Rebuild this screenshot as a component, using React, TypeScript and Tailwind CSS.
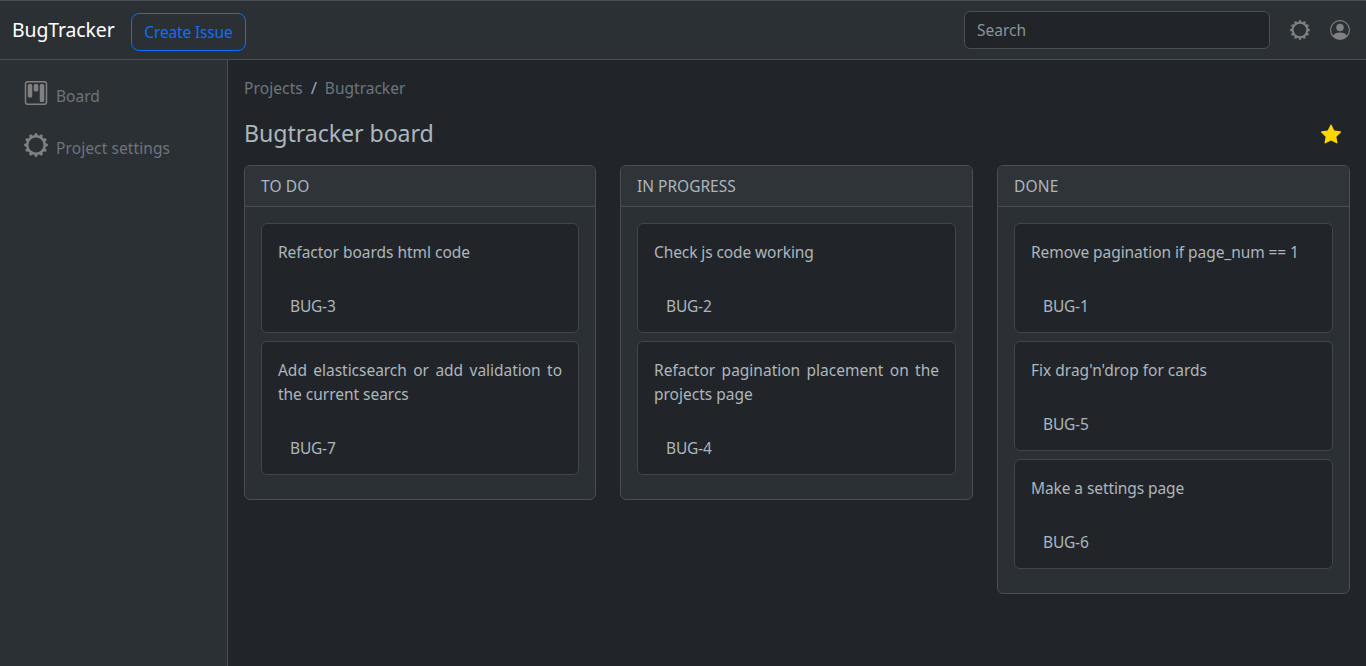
import React from 'react';
import { BsGearWide, BsKanban, BsPersonCircle, BsStarFill } from 'react-icons/bs';

type Issue = { id: string; title: string; tracking: string };
type Column = { name: string; tracking: string; issues: Issue[] };

const columns: Column[] = [
  {
    name: 'TO DO',
    tracking: 'tracking-[0.1px]',
    issues: [
      { id: 'BUG-3', title: 'Refactor boards html code', tracking: 'tracking-[-0.03px]' },
      {
        id: 'BUG-7',
        title: 'Add elasticsearch or add validation to the current searcs',
        tracking: 'tracking-[-0.03px]',
      },
    ],
  },
  {
    name: 'IN PROGRESS',
    tracking: 'tracking-normal',
    issues: [
      { id: 'BUG-2', title: 'Check js code working', tracking: 'tracking-[-0.1px]' },
      { id: 'BUG-4', title: 'Refactor pagination placement on the projects page', tracking: 'tracking-normal' },
    ],
  },
  {
    name: 'DONE',
    tracking: 'tracking-[0.2px]',
    issues: [
      { id: 'BUG-1', title: 'Remove pagination if page_num == 1', tracking: 'tracking-[-0.07px]' },
      { id: 'BUG-5', title: "Fix drag'n'drop for cards", tracking: 'tracking-normal' },
      { id: 'BUG-6', title: 'Make a settings page', tracking: 'tracking-[-0.09px]' },
    ],
  },
];

function Header() {
  return (
    <header className="flex h-[60px] shrink-0 items-center border-y border-[#495057] bg-[#2b3035] px-3">
      <a className="w-[119px] text-[19.4px] leading-[30px] tracking-[-0.08px] text-white">BugTracker</a>
      <button className="mt-1 flex h-[38px] w-[115px] items-center justify-center rounded-lg border border-[#0d6efd] tracking-[-0.15px] whitespace-nowrap text-[#0d6efd]">
        Create Issue
      </button>
      <input
        className="ml-auto h-[38px] w-[306px] rounded-md border border-[#495057] bg-[#212529] px-3 text-[#adb5bd] placeholder:text-[#8b9299] placeholder:opacity-100"
        placeholder="Search"
      />
      <BsGearWide className="ml-5 size-5 text-[#808080]" />
      <BsPersonCircle className="mr-1 ml-5 size-5 text-[#808080]" />
    </header>
  );
}

function Sidebar() {
  return (
    <nav className="flex w-[228px] shrink-0 flex-col gap-7 border-r border-[#495057] bg-[#2b3035] pt-[21px] pl-6 text-[#6c757d]">
      <a className="flex h-6 gap-2">
        <BsKanban className="size-6 text-[#808080]" />
        <span className="pt-[3px]">Board</span>
      </a>
      <a className="flex h-6 gap-2">
        <BsGearWide className="size-6 text-[#808080]" />
        <span className="pt-[3px] tracking-[0.1px]">Project settings</span>
      </a>
    </nav>
  );
}

function IssueCard({ issue }: { issue: Issue }) {
  return (
    <article className="rounded-md border border-[#42464a] bg-[#212529] px-4 pt-4 pb-[14px]">
      <p className={`text-justify ${issue.tracking}`}>{issue.title}</p>
      <div className="mt-[30px] pl-3 tracking-[-0.2px]">{issue.id}</div>
    </article>
  );
}

export default function App() {
  return (
    <div className="flex h-screen flex-col overflow-hidden bg-[#212529] font-['Noto_Sans',sans-serif] text-[15.5px] leading-6 text-[#adb5bd]">
      <Header />
      <div className="flex min-h-0 flex-1">
        <Sidebar />
        <main className="min-w-0 flex-1 px-4 pt-4">
          <div className="flex gap-2 text-[#6c757d]">
            <a className="tracking-[0.1px]">Projects</a>
            <span className="w-[6px] text-[17px] text-[#9da5ac]">/</span>
            <a>Bugtracker</a>
          </div>
          <div className="mt-[19px] flex h-[29px] items-center justify-between">
            <h1 className="text-[23.2px] leading-[29px] tracking-[-0.08px]">Bugtracker board</h1>
            <BsStarFill className="mr-[9px] size-5 text-[#ffd700]" />
          </div>
          <div className="mt-[17px] grid grid-cols-[352fr_353fr_353fr] items-start gap-6">
            {columns.map((column) => (
              <section key={column.name} className="overflow-hidden rounded-md border border-[#4b4f53] bg-[#2b3035]">
                <h2 className={`h-[41px] border-b border-[#4b4f53] bg-[#2f3439] px-4 pt-2 ${column.tracking}`}>
                  {column.name}
                </h2>
                <div className="flex flex-col gap-2 px-4 pt-4 pb-6">
                  {column.issues.map((issue) => (
                    <IssueCard key={issue.id} issue={issue} />
                  ))}
                </div>
              </section>
            ))}
          </div>
        </main>
      </div>
    </div>
  );
}
